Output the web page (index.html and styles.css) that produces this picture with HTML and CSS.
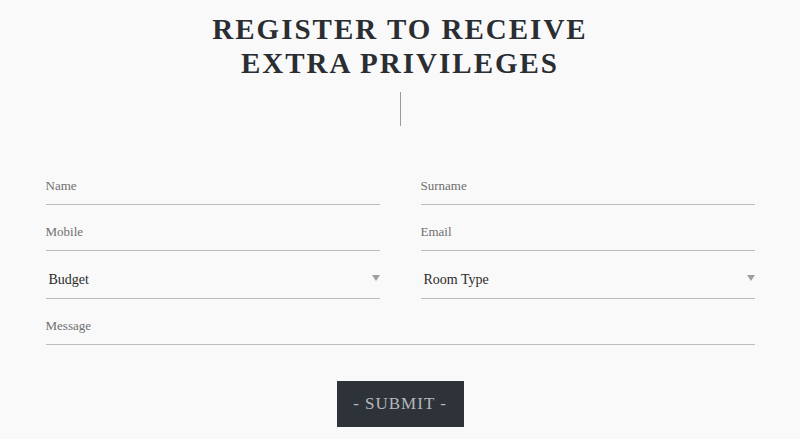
FILE: index.html
```html
<!DOCTYPE html>
<html lang="en">
<head>
<meta charset="utf-8">
<title>Register</title>
<link rel="stylesheet" href="styles.css">
</head>
<body>
<main class="wrap">
  <h1 class="title">REGISTER TO RECEIVE<br>EXTRA PRIVILEGES</h1>
  <div class="divider"></div>
  <form class="form">
    <div class="grid">
      <label class="field"><span class="ph">Name</span></label>
      <label class="field"><span class="ph">Surname</span></label>
      <label class="field"><span class="ph">Mobile</span></label>
      <label class="field"><span class="ph">Email</span></label>
      <div class="field select"><span class="val">Budget</span><span class="caret"></span></div>
      <div class="field select"><span class="val">Room Type</span><span class="caret"></span></div>
      <label class="field wide"><span class="ph">Message</span></label>
    </div>
    <div class="actions">
      <button type="button" class="submit">- SUBMIT -</button>
    </div>
  </form>
</main>
</body>
</html>
```
FILE: styles.css
```css
html, body {
  margin: 0;
  padding: 0;
  background: #f9f9f9;
}
body {
  font-family: "Liberation Serif", "DejaVu Serif", serif;
  color: #2b2f33;
}
.wrap {
  width: 709px;
  margin: 0 auto;
  padding-top: 12px;
  display: flex;
  flex-direction: column;
  align-items: center;
}
.title {
  margin: 0;
  font-size: 29px;
  line-height: 34px;
  font-weight: 700;
  letter-spacing: 2px;
  text-align: center;
  color: #2a2d31;
}
.divider {
  width: 1px;
  height: 34px;
  background: #9a9a9a;
  margin-top: 12px;
}
.form {
  width: 100%;
  margin-top: 33px;
}
.grid {
  display: grid;
  grid-template-columns: 1fr 1fr;
  column-gap: 41px;
}
.field {
  display: flex;
  align-items: center;
  height: 45px;
  border-bottom: 1px solid #bdbdb8;
  box-sizing: content-box;
}
.field .ph {
  font-size: 13px;
  color: #6f6f6f;
  padding-top: 9px;
}
.field.select {
  height: 47px;
  justify-content: space-between;
}
.select .val {
  font-size: 14px;
  color: #2a2a2a;
  padding-left: 3px;
  padding-top: 11px;
}
.caret {
  width: 0;
  height: 0;
  border-left: 4px solid transparent;
  border-right: 4px solid transparent;
  border-top: 6px solid #a0a0a0;
  margin-top: 6px;
}
.wide {
  grid-column: 1 / span 2;
}
.actions {
  display: flex;
  justify-content: center;
  margin-top: 36px;
}
.submit {
  width: 127px;
  height: 46px;
  background: #2e333a;
  border: none;
  color: #b4b8bc;
  font-family: "Liberation Serif", "DejaVu Serif", serif;
  font-size: 17px;
  letter-spacing: 1px;
  padding: 0;
  cursor: pointer;
}
```
